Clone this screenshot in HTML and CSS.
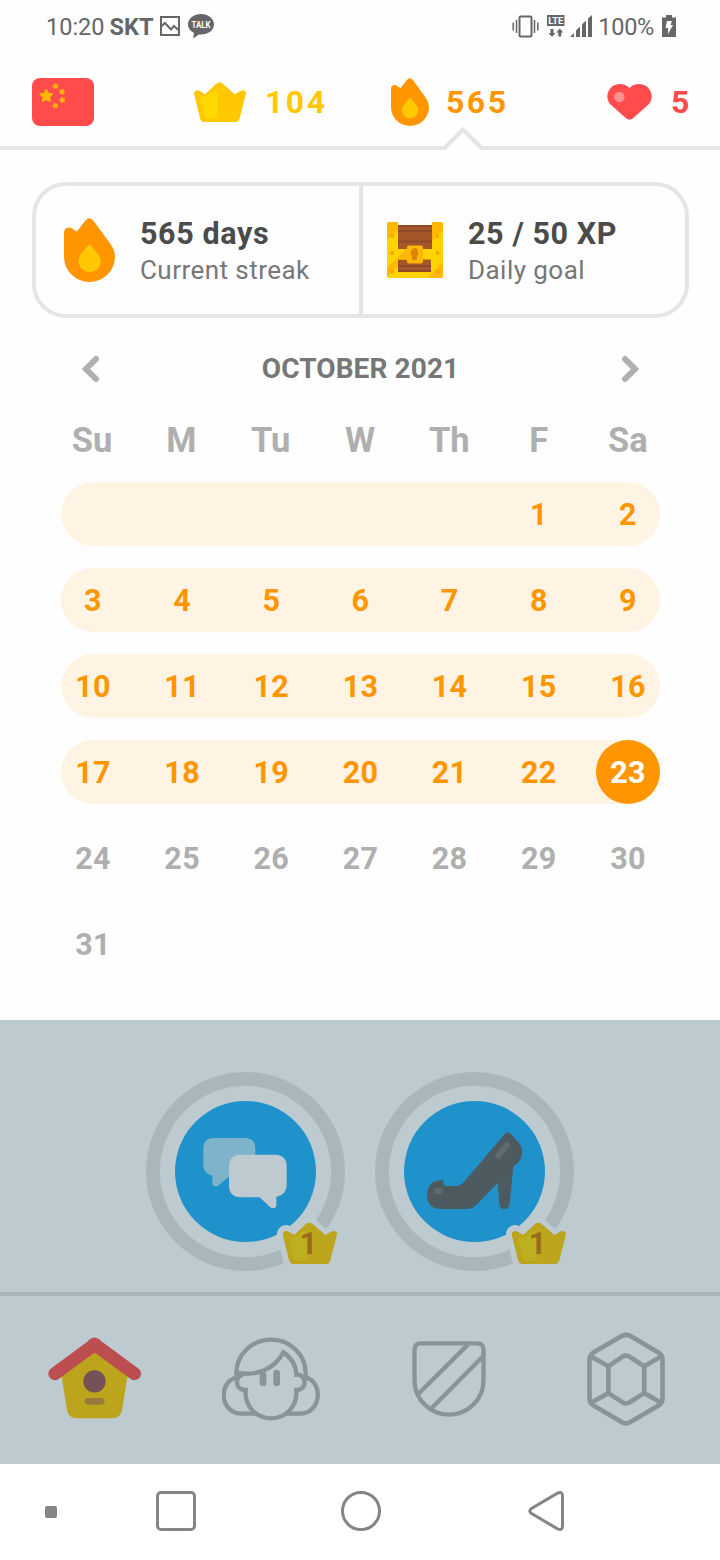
FILE: index.html
```html
<!DOCTYPE html>
<html lang="en">
<head>
    <meta charset="UTF-8">
    <meta name="viewport" content="width=device-width, initial-scale=1.0">
    <title>Streak</title>
    <link rel="stylesheet" href="styles.css">
</head>
<body>
    <!-- Shared shapes -->
    <svg class="defs" width="0" height="0">
        <symbol id="crown" viewBox="428 487 163 125" preserveAspectRatio="none">
            <path class="crown-base" d="M429 527Q426 518 434 514Q440 511 447 516L463 525L497 493Q508 482 519 493L556 525L573 515Q581 511 588 515Q593 519 590 527L571 601Q568 612 558 612H460Q450 612 447 601Z"/>
            <path class="crown-shine" d="M447 538Q444 531 451 532Q461 534 469 528L485 515Q503 509 503 530V592Q503 602 493 602H471Q464 602 462 596Z"/>
        </symbol>
        <symbol id="flame" viewBox="132 143 154 190" preserveAspectRatio="none">
            <path fill="#ff9600" d="M132 187Q132 172 146 171Q152 171 158 175L170 184L196 151Q208 136 221 151L273 221Q286 239 286 258A77 75 0 0 1 132 258Z"/>
            <path fill="#ffc800" d="M205 224Q209 219 213 224L236 252Q243 262 243 270A33.5 33.5 0 0 1 176 270Q176 262 182 252Z"/>
        </symbol>
    </svg>

    <div class="status-bar">
        <span class="clock">10:20</span>
        <span class="carrier">SKT</span>
        <svg class="status-picture" width="20" height="20" viewBox="0 0 20 20" fill="none" stroke="#666" stroke-width="2">
            <rect x="1" y="1" width="18" height="18"/>
            <path d="M1 10.5L5 7L11 13.5L14 10L19 14.5"/>
        </svg>
        <svg class="status-talk" width="26" height="25" viewBox="0 0 26 25">
            <path fill="#666" d="M13 0C20 0 26 4.400 26 10.300C26 16.500 20 20.500 13 20.500L11 20.400L5 24.500L6 19C2 17 0 14 0 10.300C0 4.400 6 0 13 0Z"/>
            <text x="3.500" y="13.800" textLength="19" lengthAdjust="spacingAndGlyphs" class="talk-text">TALK</text>
        </svg>
        <div class="status-right">
            <svg width="27" height="23" viewBox="0 0 27 23" fill="none" stroke="#666">
                <rect x="7.500" y="1.500" width="12" height="20" rx="1" stroke-width="2"/>
                <path stroke-width="1.500" d="M4.500 5V18M1.200 7.500V15.500M22.500 5V18M25.800 7.500V15.500"/>
            </svg>
            <svg class="status-lte" width="18" height="22" viewBox="0 0 18 22">
                <rect width="17.500" height="11" fill="#666"/>
                <text x="8.800" y="9" class="lte-text">LTE</text>
                <path fill="#666" d="M3.500 14H6.500V18H8.500L5 21.700L1.500 18H3.500ZM11.300 21.500H14.300V17.500H16.300L12.800 13.500L9.300 17.500H11.300Z"/>
            </svg>
            <svg class="status-signal" width="22" height="22" viewBox="0 0 22 22" fill="#666">
                <path d="M0 22L4 18V22ZM6 22V15.500L10 11.500V22ZM12 22V9.500L16 5.500V22ZM18 22V3.500L22 0V22Z"/>
            </svg>
            <span class="battery-level">100%</span>
            <svg class="status-battery" width="14" height="22" viewBox="0 0 14 22">
                <path fill="#666" d="M4 0H10V2.500H14V22H0V2.500H4Z"/>
                <path fill="#fff" d="M5 6H10L8.500 10H11L6 19V13H3.500Z"/>
            </svg>
        </div>
    </div>

    <header class="top-bar">
        <svg class="flag" width="62" height="48" viewBox="0 0 62 48">
            <rect width="62" height="48" rx="8" fill="#ff4b4b"/>
            <g fill="#ffb900" stroke="#ffb900" stroke-linejoin="round">
                <path stroke-width="1.500" d="M14.300 11.500L16.300 15.500L20.300 16L17.400 19L18.100 23.200L14.300 21.300L10.500 23.200L11.200 19L8 16L12.300 15.500Z"/>
                <path stroke-width=".6" d="M23 5L24.200 6.700L26.300 6.600L25.200 8.400L26 10.300L24 9.800L22.300 11.100L22.200 9L20.400 7.900L22.400 7.100Z"/>
                <path stroke-width=".6" d="M31 10.700L31.500 12.700L33.200 13.600L31.500 14.700L31.300 16.700L29.700 15.400L27.700 15.900L28.400 14L27.300 12.300L29.400 12.300Z"/>
                <path stroke-width=".6" d="M29.700 19L31 20.600L33 20.400L32 22.200L32.800 24.200L30.700 23.700L29.100 25.100L28.900 23L27 22L29 21.100Z"/>
                <path stroke-width=".6" d="M22.300 24.700L23.800 26.200L25.900 25.800L25 27.700L25.900 29.600L23.800 29.300L22.300 30.700L21.900 28.700L20.200 27.700L22 26.700Z"/>
            </g>
        </svg>
        <div class="counter counter-crowns">
            <svg class="crown-gold" width="52" height="40"><use href="#crown"/></svg>
            <span>104</span>
        </div>
        <div class="counter counter-streak">
            <svg width="38" height="48"><use href="#flame"/></svg>
            <span>565</span>
        </div>
        <div class="counter counter-hearts">
            <svg width="45" height="36" viewBox="0 0 45 36">
                <path fill="#ff4b4b" d="M22.500 4C27 -1 35 -1 40 2.500C45 7 46.500 14.500 42 20L26 34.300Q22.500 37.200 19 34.300L3 20C-1.500 14.500 0 7 5 2.500C10 -1 18 -1 22.500 4Z"/>
                <circle cx="12.300" cy="13" r="5.300" fill="#ff9090"/>
            </svg>
            <span>5</span>
        </div>
        <svg class="caret" width="40" height="24" viewBox="0 0 40 24">
            <path fill="#fefefe" d="M2 24L20 4L38 24Z"/>
            <path fill="none" stroke="#e5e5e5" stroke-width="4" d="M0 22H1.500L20 3.500L38.500 22H40"/>
        </svg>
    </header>

    <main class="streak">
        <section class="stats">
            <div class="stat">
                <svg class="stat-flame" width="51" height="64"><use href="#flame"/></svg>
                <div class="stat-text">
                    <strong>565 days</strong>
                    <span>Current streak</span>
                </div>
            </div>
            <div class="stat stat-goal">
                <svg width="56" height="56" viewBox="0 0 56 56">
                    <rect x="8" y="3" width="40" height="49" fill="#a5572a"/>
                    <path fill="#8d4a29" d="M8 3H48V4.500H8ZM8 8H48V10H8ZM8 18.500H48V20.500H8ZM8 43H48V45H8ZM8 48H48V50H8Z"/>
                    <path fill="#ffd200" d="M0 2Q0 0 2 0H11V27H45V0H54Q56 0 56 2V54Q56 56 54 56H2Q0 56 0 54ZM11 37.500V50H44V37.500Z" fill-rule="evenodd"/>
                    <path fill="#ffb800" d="M0 2Q0 0 2 0H11V8L0 18ZM45 0H54Q56 0 56 2V8L45 19ZM0 46L20 26.500H30L20 37.500H11V44L0 55ZM40 56L56 40V54Q56 56 54 56Z"/>
                    <path fill="#ffd200" d="M0 18L11 7V27L0 38Z"/>
                    <rect x="20" y="23.500" width="16" height="18" rx="2" fill="#ffb800"/>
                    <path fill="#dc8500" d="M24 29Q25 26 29 26Q31.500 28 31 32L30 35V38H25V34Q23 32 24 29Z"/>
                    <g fill="#f5a500">
                        <circle cx="5.200" cy="14" r="1.900"/><circle cx="5.200" cy="31" r="1.900"/><circle cx="5.200" cy="49.500" r="1.900"/>
                        <circle cx="50.500" cy="14" r="1.900"/><circle cx="50.500" cy="31" r="1.900"/><circle cx="50.500" cy="49.500" r="1.900"/>
                    </g>
                </svg>
                <div class="stat-text">
                    <strong>25 / 50 XP</strong>
                    <span>Daily goal</span>
                </div>
            </div>
        </section>

        <section class="calendar">
            <div class="month">
                <svg width="18" height="28" viewBox="0 0 18 28"><path d="M14 4L4 14L14 24"/></svg>
                <h2>OCTOBER 2021</h2>
                <svg width="18" height="28" viewBox="0 0 18 28"><path d="M4 4L14 14L4 24"/></svg>
            </div>
            <div class="weekdays">
                <span>Su</span><span>M</span><span>Tu</span><span>W</span><span>Th</span><span>F</span><span>Sa</span>
            </div>
            <div class="week done">
                <span></span><span></span><span></span><span></span><span></span><span>1</span><span>2</span>
            </div>
            <div class="week done">
                <span>3</span><span>4</span><span>5</span><span>6</span><span>7</span><span>8</span><span>9</span>
            </div>
            <div class="week done">
                <span>10</span><span>11</span><span>12</span><span>13</span><span>14</span><span>15</span><span>16</span>
            </div>
            <div class="week done">
                <span>17</span><span>18</span><span>19</span><span>20</span><span>21</span><span>22</span><span class="today">23</span>
            </div>
            <div class="week">
                <span>24</span><span>25</span><span>26</span><span>27</span><span>28</span><span>29</span><span>30</span>
            </div>
            <div class="week">
                <span>31</span><span></span><span></span><span></span><span></span><span></span><span></span>
            </div>
        </section>
    </main>

    <section class="skills">
        <svg class="skill" width="199" height="199" viewBox="18 36 597 597">
            <circle cx="316.500" cy="334.500" r="277.700" fill="none" stroke="#a9b6bc" stroke-width="41.500"/>
            <circle cx="316.500" cy="334.500" r="211.500" fill="#1f92cb"/>
            <path fill="#7fb3cc" d="M222 234H313Q346 234 346 267V285L266 350L238 374Q228 382 219 376Q217 374 217 370V347Q190 342 190 316V267Q190 234 222 234Z"/>
            <path fill="#bdcacf" d="M303 284H404Q440 284 440 320V375Q440 404 409 411V435Q409 444 400 445Q395 445 390 441L359 412H303Q267 412 267 376V320Q267 284 303 284Z"/>
            <path class="crown-gap" d="M438 522L463 540L508 499L556 540L580 522L562 603H457Z"/>
            <svg class="crown-dim" x="428" y="487" width="163" height="125"><use href="#crown"/></svg>
            <text x="506" y="582" class="level">1</text>
        </svg>
        <svg class="skill" width="199" height="199" viewBox="18 36 597 597">
            <circle cx="316.500" cy="334.500" r="277.700" fill="none" stroke="#a9b6bc" stroke-width="41.500"/>
            <circle cx="316.500" cy="334.500" r="211.500" fill="#1f92cb"/>
            <path fill="#4d5a60" d="M409 220Q416 213 423 220L447 245Q459 258 459 277Q459 296 449 306L433 320L422 432Q420 447 406 447Q393 447 391 432L386 369L324 433Q311 447 295 447H216Q174 445 174 404Q176 363 216 360Q224 361 224 367L223 373Q226 378 232 378H263Q275 378 284 367Z"/>
            <path stroke="#5d6b70" stroke-width="18" stroke-linecap="round" d="M387 288L414 255"/>
            <ellipse cx="208" cy="393" rx="14" ry="10" fill="#5d6b70"/>
            <path class="crown-gap" d="M438 522L463 540L508 499L556 540L580 522L562 603H457Z"/>
            <svg class="crown-dim" x="428" y="487" width="163" height="125"><use href="#crown"/></svg>
            <text x="506" y="582" class="level">1</text>
        </svg>
    </section>

    <nav class="tabs">
        <svg class="tab-home" width="94" height="82" viewBox="53 80 281 246">
            <path fill="#bca41d" d="M92 190L192 120L292 190L275 297Q271 324 244 324H140Q113 324 109 297Z"/>
            <path fill="none" stroke="#bd4e50" stroke-width="39" stroke-linecap="round" d="M73 190L186 107"/>
            <path fill="none" stroke="#bd4e50" stroke-width="39" stroke-linecap="round" d="M312 190L199 107"/>
            <path fill="#bd4e50" d="M175 89Q192 74 209 89L218 106L192 129L166 106Z"/>
            <circle cx="192" cy="213" r="33.500" fill="#755256"/>
            <rect x="162" y="263" width="60" height="20" rx="10" fill="#987b3a"/>
        </svg>
        <svg class="tab-profile" width="98" height="84" viewBox="576 84 294 252" fill="none" stroke="#87949a" stroke-width="13">
            <path d="M619 200V193A104 101 0 0 1 827 193V203"/>
            <path d="M616 190C680 204 735 180 760 130C784 146 798 170 799 197C812 195 824 205 824 219C824 234 813 244 799 243C803 289 770 328 723 328C676 328 643 289 647 243C632 243 621 235 621 219C621 207 628 199 640 196"/>
            <path d="M621 206C563 217 568 313 636 314H680M827 206C880 217 876 313 809 314H767"/>
            <path stroke-width="20" stroke-linecap="round" d="M740 192V221M699 198V221"/>
        </svg>
        <svg class="tab-league" width="74" height="76" viewBox="96 92 222 229" fill="none" stroke="#87949a" stroke-width="13">
            <path d="M123 99H291Q311 99 311 119V210A104 104 0 0 1 103 210V119Q103 99 123 99Z"/>
            <path d="M264 103L115 251M309 139L153 296"/>
        </svg>
        <svg class="tab-shop" width="78" height="94" viewBox="621 68 234 283" fill="none" stroke="#87949a" stroke-width="14" stroke-linejoin="round">
            <path d="M725 80Q738 73 751 80L836 130Q848 138 848 151V268Q848 281 836 289L751 339Q738 347 725 339L640 289Q628 281 628 268V151Q628 138 640 130Z"/>
            <path d="M728 142Q738 136 748 142L793 171V252L748 280Q738 286 728 280L685 252V171Z"/>
            <path d="M633 142L685 171M844 142L793 171M633 281L685 252M844 281L793 252"/>
        </svg>
    </nav>

    <footer class="system-nav">
        <svg class="nav-dot" width="12" height="12"><rect width="12" height="12" rx="2"/></svg>
        <svg class="nav-recent" width="40" height="40"><rect x="1.500" y="1.500" width="37" height="37" rx="3.500"/></svg>
        <svg class="nav-home" width="40" height="40"><circle cx="20" cy="20" r="18.500"/></svg>
        <svg class="nav-back" width="36" height="40"><path d="M29.500 2.200Q34.500 0 34.500 5V35Q34.500 40 29.500 37.800L3.500 22.500Q0 20 3.500 17.500Z"/></svg>
    </footer>
</body>
</html>
```
FILE: styles.css
```css
* {
    box-sizing: border-box;
}
body {
    margin: 0;
    width: 720px;
    height: 1560px;
    overflow: hidden;
    background: #fefefe;
    font-family: Roboto, 'Liberation Sans', sans-serif;
}
svg {
    display: block;
    flex: none;
}
.defs {
    height: 0;
}

/* Status bar */
.status-bar {
    display: flex;
    align-items: center;
    height: 52px;
    padding: 0 44px 0 46px;
    color: #666;
    font-size: 23.5px;
    line-height: 28px;
}
.status-bar span {
    padding-top: 2px;
}
.carrier {
    margin-left: 5px;
    font-weight: bold;
}
.status-picture {
    margin-left: 6px;
}
.status-talk {
    margin-left: 8px;
}
.talk-text {
    fill: #fff;
    font-size: 9.5px;
    font-weight: bold;
}
.status-right {
    display: flex;
    align-items: center;
    margin-left: auto;
}
.status-lte {
    margin-left: 8px;
}
.lte-text {
    fill: #fff;
    font-size: 9.5px;
    font-weight: bold;
    text-anchor: middle;
}
.status-signal {
    margin-left: 5px;
}
.battery-level {
    margin-left: 6px;
    letter-spacing: -0.3px;
}
.status-battery {
    margin-left: 8px;
}

/* Counters */
.top-bar {
    position: relative;
    display: flex;
    align-items: center;
    height: 98px;
    padding: 6px 0 0 32px;
    border-bottom: 4px solid #e5e5e5;
}
.counter {
    display: flex;
    align-items: center;
    font-size: 32px;
    font-weight: bold;
    letter-spacing: 2.5px;
}
.counter-crowns {
    width: 196px;
    margin-left: 100px;
    color: #ffc800;
}
.counter-crowns span {
    margin-left: 19px;
}
.counter-streak {
    width: 217px;
    padding-left: 1px;
    color: #ff9600;
}
.counter-streak span {
    margin-left: 17px;
}
.counter-hearts {
    color: #ff4b4b;
}
.counter-hearts span {
    margin-left: 19px;
}
.crown-gold {
    fill: #ffc800;
    --shine: #ffd900;
}
.crown-shine {
    fill: var(--shine);
}
.caret {
    position: absolute;
    left: 443px;
    bottom: -4px;
}

/* Stats card */
.stats {
    display: flex;
    width: 657px;
    height: 136px;
    margin: 32px 0 0 32px;
    border: 4px solid #e5e5e5;
    border-radius: 34px;
}
.stat {
    display: flex;
    align-items: center;
    flex: none;
    width: 327px;
    padding-left: 28px;
    border-right: 4px solid #e5e5e5;
}
.stat-goal {
    width: 322px;
    padding-left: 24px;
    border-right: none;
}
.stat-text {
    display: flex;
    flex-direction: column;
    margin-left: 25px;
    padding-top: 4px;
    color: #777;
    font-size: 26px;
    line-height: 36px;
    letter-spacing: 0.45px;
}
.stat-text strong {
    color: #4b4b4b;
    font-size: 30.5px;
    font-weight: bold;
    letter-spacing: 0.6px;
}

/* Calendar */
.calendar {
    width: 599px;
    margin-left: 61px;
}
.month {
    display: flex;
    align-items: center;
    justify-content: space-between;
    height: 102px;
    padding: 0 21px;
}
.month path {
    fill: none;
    stroke: #afafaf;
    stroke-width: 6;
    stroke-linecap: round;
}
.month h2 {
    margin: 0 0 2px;
    color: #777;
    font-size: 28px;
    font-weight: bold;
    letter-spacing: 0.1px;
}
.weekdays,
.week {
    display: flex;
    justify-content: space-between;
    color: #afafaf;
    font-weight: bold;
    text-align: center;
}
.weekdays {
    height: 62px;
    font-size: 34.5px;
    line-height: 40px;
}
.weekdays span,
.week span {
    width: 64px;
}
.weekdays span {
    margin-left: -1px;
}
.week {
    height: 64px;
    margin-bottom: 22px;
    border-radius: 32px;
    font-size: 30.5px;
    line-height: 65px;
    letter-spacing: 0.3px;
}
.done {
    background: #fff4e4;
    color: #ff9600;
}
.week .today {
    border-radius: 50%;
    background: #ff9600;
    color: #fff;
}

/* Skills behind the drawer */
.skills {
    display: flex;
    justify-content: center;
    gap: 30px;
    height: 272px;
    margin-top: 44px;
    padding-top: 52px;
    background: #bdcacf;
}
.skill {
    overflow: visible;
}
.crown-gap {
    fill: #bdcacf;
    stroke: #bdcacf;
    stroke-width: 54;
    stroke-linejoin: round;
}
.crown-dim {
    fill: #bca41d;
    --shine: #bdb01f;
}
.level {
    fill: #9b6b1c;
    font-size: 92px;
    font-weight: bold;
    text-anchor: middle;
}

/* Tabs */
.tabs {
    display: flex;
    align-items: center;
    height: 172px;
    padding: 0 0 2px 48px;
    border-top: 4px solid #a9b6bc;
    background: #bdcacf;
}
.tab-home {
    margin-bottom: 3px;
}
.tab-profile {
    margin-left: 80px;
}
.tab-league {
    margin-left: 92px;
}
.tab-shop {
    margin-left: 101px;
}

/* Android navigation */
.system-nav {
    display: flex;
    align-items: center;
    height: 96px;
    padding: 0 0 2px 45px;
    background: #fff;
}
.system-nav svg {
    fill: none;
    stroke: #858585;
    stroke-width: 3;
}
.system-nav .nav-dot {
    margin-top: 1px;
    fill: #858585;
    stroke: none;
}
.nav-recent {
    margin-left: 99px;
}
.nav-home {
    margin-left: 144.5px;
}
.nav-back {
    margin-left: 147.5px;
}
```
